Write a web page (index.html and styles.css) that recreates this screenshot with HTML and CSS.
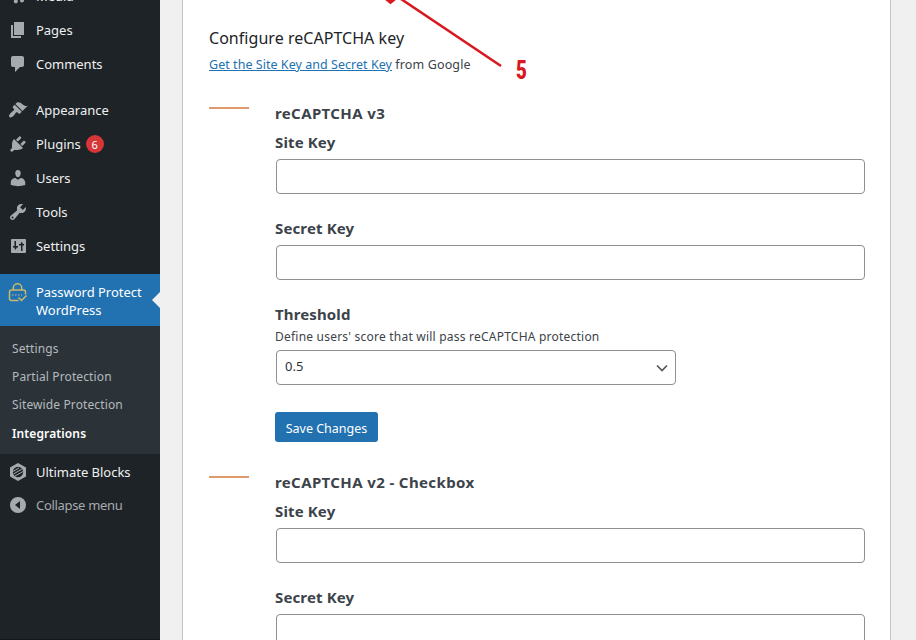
FILE: index.html
```
<!DOCTYPE html>
<html lang="en">
<head>
<meta charset="utf-8">
<title>Integrations</title>
<link rel="stylesheet" href="styles.css">
</head>
<body>
<div class="app">
  <nav class="sidebar">
    <ul class="menu">
      <li class="item"><svg class="icon" viewBox="0 0 20 20"><path d="M3 2h8v7H3zM6 10h3.600v4.500a2 2 0 1 1-3.600 0zM12 10h4v4.500a2 2 0 1 1-4 0z"/></svg><span>Media</span></li>
      <li class="item"><svg class="icon" viewBox="0 0 20 20"><path d="M6 15V2h10v13H6zm-1 1h8v2H3V5h2v11z"/></svg><span>Pages</span></li>
      <li class="item"><svg class="icon" viewBox="0 0 20 20"><path d="M5 2h9c1.100 0 2 .9 2 2v7c0 1.100-.9 2-2 2h-2l-5 5v-5H5c-1.100 0-2-.9-2-2V4c0-1.100.9-2 2-2z"/></svg><span>Comments</span></li>
      <li class="item gap-before"><svg class="icon" viewBox="0 0 20 20"><path d="M14.480 11.060L7.410 3.990l1.500-1.500c.5-.56 2.300-.47 3.510.32 1.210.8 1.430 1.280 2.910 2.100 1.180.64 2.450 1.260 4.450.85zm-.71.71L6.700 4.700 4.930 6.470c-.39.39-.39 1.020 0 1.410l1.060 1.060c.39.39.39 1.030 0 1.420-.6.6-1.430 1.110-2.210 1.690-.35.26-.7.53-1.010.84C1.430 14.230.4 16.080 1.400 17.070c.99 1 2.840-.03 4.180-1.360.31-.31.58-.66.85-1.020.57-.78 1.080-1.610 1.690-2.210.39-.39 1.020-.39 1.410 0l1.060 1.060c.39.39 1.020.39 1.410 0z"/></svg><span>Appearance</span></li>
      <li class="item"><svg class="icon" viewBox="0 0 20 20"><path d="M13.110 4.360L9.870 7.600 8 5.730l3.240-3.240c.35-.34 1.050-.2 1.560.32.52.51.66 1.210.31 1.550zm-8 1.770l.91-1.120 9.010 9.010-1.190.84c-.71.71-2.630 1.160-3.820 1.160H6.140L4.900 17.260c-.59.59-1.540.59-2.120 0-.59-.58-.59-1.530 0-2.120l1.240-1.240v-3.880c0-1.130.4-3.190 1.090-3.890zm7.260 3.970l3.240-3.240c.34-.35 1.040-.21 1.550.31.52.51.66 1.210.31 1.550l-3.240 3.250z"/></svg><span>Plugins</span><span class="badge">6</span></li>
      <li class="item"><svg class="icon" viewBox="0 0 20 20"><path d="M10 9.250c-2.270 0-2.730-3.440-2.730-3.440C7 4.020 7.820 2 9.970 2c2.160 0 2.980 2.020 2.710 3.810 0 0-.41 3.440-2.680 3.440zm0 2.570L12.720 10c2.390 0 4.520 2.330 4.520 4.530v2.490s-3.650 1.130-7.240 1.130c-3.650 0-7.240-1.130-7.240-1.130v-2.490c0-2.250 1.940-4.480 4.470-4.480z"/></svg><span>Users</span></li>
      <li class="item"><svg class="icon" viewBox="0 0 20 20"><path d="M16.680 9.770c-1.340 1.340-3.300 1.670-4.950.99l-5.410 6.520c-.99.99-2.590.99-3.580 0s-.99-2.590 0-3.570l6.520-5.420c-.68-1.650-.35-3.610.99-4.950 1.280-1.280 3.120-1.620 4.720-1.060l-2.890 2.890 2.820 2.820 2.860-2.870c.53 1.580.18 3.390-1.080 4.650zM3.810 16.210c.4.39 1.040.39 1.430 0 .4-.4.4-1.040 0-1.430-.39-.4-1.030-.4-1.430 0-.39.39-.39 1.030 0 1.430z"/></svg><span>Tools</span></li>
      <li class="item"><svg class="icon" viewBox="0 0 20 20"><path fill-rule="evenodd" d="M4 3h13q1 0 1 1v12q0 1-1 1H4q-1 0-1-1V4q0-1 1-1zM6.500 5v5H5v1.500h1.200l1.300 2.500 1.300-2.500H10V10H8V5zM13 15h1.500V9.500H16V8h-1l-1.250-2.500L12.500 8H11v1.500h2z"/></svg><span>Settings</span></li>
    </ul>
    <div class="current">
      <svg class="icon lock" viewBox="0 0 20 20"><path d="M5.300 7V5a4.200 4.200 0 0 1 8.400 0V7M10.500 17.500H3.500q-2 0-2-2V9q0-2 2-2h12q2 0 2 2v2.500M10.500 14.500l3 3 5-5"/><path class="dots" d="M4 12h10"/></svg>
      <span>Password Protect WordPress</span>
    </div>
    <ul class="submenu">
      <li>Settings</li>
      <li>Partial Protection</li>
      <li>Sitewide Protection</li>
      <li class="selected">Integrations</li>
    </ul>
    <ul class="menu tail">
      <li class="item"><svg class="icon" viewBox="0 0 20 20"><path d="M10 1l8 4.500v9L10 19l-8-4.500v-9z"/><circle class="cut" cx="10" cy="10" r="5.200"/><path class="stripes" d="M5 9.500l6-3.500M5.500 12l8.500-5M7 14l8-4.500"/></svg><span>Ultimate Blocks</span></li>
      <li class="item collapse"><svg class="icon" viewBox="0 0 20 20"><path fill-rule="evenodd" d="M10 2a8 8 0 1 1 0 16 8 8 0 0 1 0-16zM12 6l-5 4 5 4z"/></svg><span>Collapse menu</span></li>
    </ul>
  </nav>
  <main class="panel">
    <h1>Configure reCAPTCHA key</h1>
    <p class="intro"><a href="#">Get the Site Key and Secret Key</a> <span>from Google</span></p>
    <section class="group">
      <div class="rule"></div>
      <div class="fields">
        <h2 class="wide">reCAPTCHA v3</h2>
        <label>Site Key<input type="text"></label>
        <label>Secret Key<input type="text"></label>
        <div class="threshold">
          <h2>Threshold</h2>
          <p>Define users' score that will pass reCAPTCHA protection</p>
          <div class="select"><span>0.5</span><svg viewBox="0 0 12 8"><path d="M1 1.500l5 5 5-5"/></svg></div>
        </div>
        <button type="button">Save Changes</button>
      </div>
    </section>
    <section class="group">
      <div class="rule"></div>
      <div class="fields">
        <h2 class="wide">reCAPTCHA v2 - Checkbox</h2>
        <label>Site Key<input type="text"></label>
        <label>Secret Key<input type="text"></label>
      </div>
    </section>
  </main>
</div>
<svg class="arrow" viewBox="0 0 160 90"><path d="M21 -1L121 66"/><path class="head" d="M6 -1L10.500 2.500 15 -1z"/></svg>
<span class="step">5</span>
</body>
</html>
```
FILE: styles.css
```
* { box-sizing: border-box; }
body { margin: 0; height: 640px; overflow: hidden; position: relative; background: #f0f0f1; font: 13px/18px "Noto Sans", sans-serif; color: #3c434a; }
ul, h1, h2, p { margin: 0; padding: 0; list-style: none; }
.app { display: flex; height: 640px; overflow: hidden; }
.sidebar { width: 160px; flex: none; background: #1d2327; color: #f0f0f1; border-bottom: 1px solid #15171b; letter-spacing: -.02px; }
.menu { margin-top: -21px; }
.item { height: 34px; display: flex; align-items: center; padding-left: 8px; }
.gap-before { margin-top: 12px; }
.icon { width: 20px; height: 20px; flex: none; margin-right: 8px; fill: #a7aaad; }
.badge { width: 18px; height: 18px; border-radius: 9px; margin-left: 5px; background: #d63638; color: #fff; font-size: 11px; line-height: 19px; text-align: center; }
.current { position: relative; display: flex; align-items: flex-start; margin-top: 11px; height: 52px; padding: 9px 8px; background: #2271b1; color: #fff; }
.current::after { content: ""; position: absolute; right: 0; top: 18px; border: 8px solid transparent; border-left: 0; border-right-color: #f0f0f1; }
.lock { fill: none; stroke: #c9b96a; stroke-width: 1.5; }
.dots { stroke-dasharray: 1.5 1.5; stroke: #8fa5a0; }
.submenu { height: 128px; padding-top: 9px; background: #2c3338; color: #b4b9be; font-size: 12px; line-height: 28px; letter-spacing: .12px; }
.submenu li { padding-left: 12px; height: 28px; }
.submenu .selected { color: #fff; font-weight: 600; line-height: 30px; }
.tail { margin-top: 1px; }
.collapse { color: #a7aaad; letter-spacing: -.32px; height: 32px; }
.cut { fill: #1d2327; }
.stripes { stroke: #a7aaad; stroke-width: 1; }
.panel { width: 709px; margin-left: 22px; padding: 26px 25px 0 26px; background: #fff; border: solid #c3c4c7; border-width: 0 1px; }
h1 { font-size: 16px; line-height: 24px; font-weight: 400; letter-spacing: .04px; color: #1d2327; }
.intro { margin-top: 6px; font-size: 12.5px; letter-spacing: .04px; }
.intro a { color: #2271b1; }
.intro span { letter-spacing: .14px; }
.group { display: flex; gap: 26px; padding-top: 29px; height: 369px; }
.rule { width: 40px; height: 2px; margin-top: 4px; background: #de9a69; }
.fields { width: 590px; }
h2, label { display: block; font-size: 15px; line-height: 20px; font-weight: 700; letter-spacing: .13px; }
.wide { letter-spacing: .38px; margin-bottom: 9px; }
label { margin-bottom: 24px; }
input { display: block; width: 589px; height: 35px; margin: 7px 0 0 1px; border: 1px solid #8c8f94; border-radius: 4px; background: #fff; }
.threshold p { margin-top: 4px; font-size: 12px; letter-spacing: .22px; }
.select { display: flex; align-items: center; justify-content: space-between; width: 400px; height: 35px; margin: 4px 0 0 1px; padding: 0 7px 4px 8px; border: 1px solid #8c8f94; border-radius: 4px; color: #2c3338; }
.select svg { width: 12px; height: 8px; margin-top: 5px; fill: none; stroke: #50575e; stroke-width: 1.7; }
button { display: block; width: 103px; height: 30px; margin-top: 27px; padding: 3px 0 0; border: 0; border-radius: 3px; background: #2271b1; color: #fff; font: 12.5px/18px "Noto Sans", sans-serif; }
.arrow { position: absolute; left: 380px; top: 0; width: 160px; height: 90px; fill: none; stroke: #d8191f; stroke-width: 2.6; }
.head { fill: #d8191f; }
.step { position: absolute; left: 514px; top: 57px; font: 900 26px/26px "Roboto", sans-serif; color: #d8191f; transform: scaleX(.72); }
```
